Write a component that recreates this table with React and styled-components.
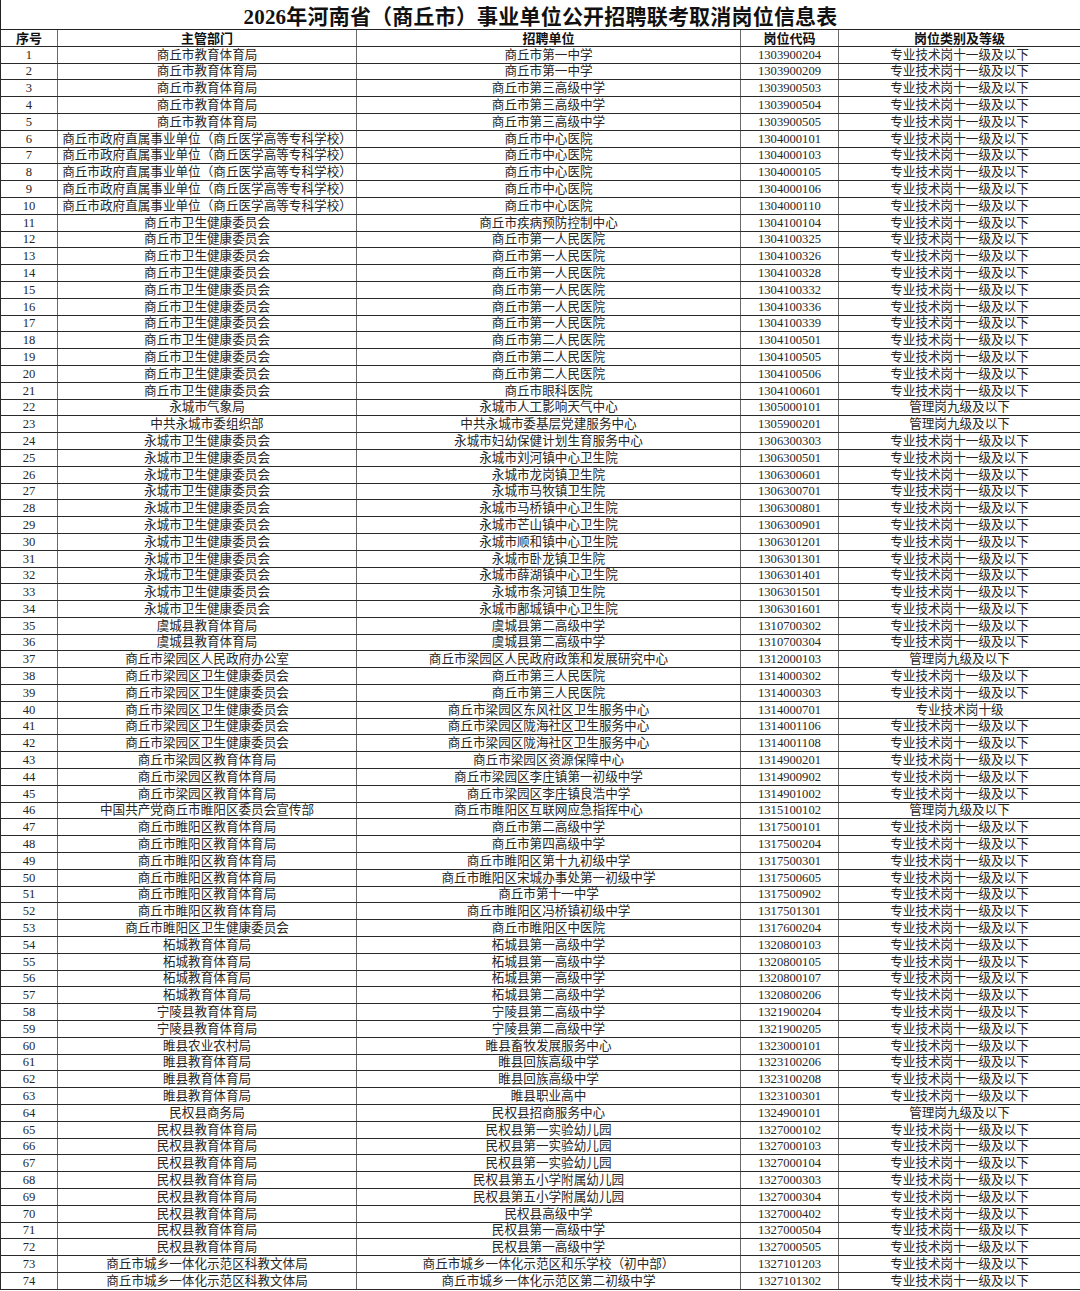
import React from "react";
import styled, { createGlobalStyle } from "styled-components";

const GlobalStyle = createGlobalStyle`
  html, body {
    margin: 0;
    padding: 0;
    background: #ffffff;
  }
  body {
    font-family: "Liberation Serif", "Noto Sans CJK SC", serif;
    color: #1c1c1c;
  }
`;

const COLS = "57px 299px 384px 98px 242px";
const ROW_H = "16.8px";

const Sheet = styled.div`
  width: 1080px;
  display: flex;
  flex-direction: column;
  background: #fff;
`;

const Title = styled.div`
  height: 30px;
  box-sizing: border-box;
  border-left: 1px solid #222;
  border-bottom: 1px solid #222;
  display: flex;
  align-items: center;
  justify-content: center;
  font-family: "Liberation Serif", "Noto Sans CJK SC", serif;
  font-weight: 700;
  font-size: 21px;
  color: #111;
  letter-spacing: 0.2px;
  padding-top: 1px;
`;

const Row = styled.div`
  display: grid;
  grid-template-columns: ${COLS};
  height: ${ROW_H};
  box-sizing: border-box;
  border-bottom: 1px solid #2a2a2a;
  border-left: 1px solid #2a2a2a;
`;

const Cell = styled.div`
  box-sizing: border-box;
  border-right: 1px solid ${(p) => (p.$last ? "#2a2a2a" : "#6a6a6a")};
  display: flex;
  align-items: flex-end;
  justify-content: center;
  white-space: nowrap;
  overflow: hidden;
  font-size: ${(p) => (p.$head ? "13px" : "12.6px")};
  font-weight: ${(p) => (p.$head ? 700 : 400)};
  line-height: 15px;
  padding-top: 1px;
  color: ${(p) => (p.$head ? "#111" : "#262626")};
`;

const T = "专业技术岗十一级及以下";
const M = "管理岗九级及以下";

const rows = [
  ["商丘市教育体育局", "商丘市第一中学", "1303900204", T],
  ["商丘市教育体育局", "商丘市第一中学", "1303900209", T],
  ["商丘市教育体育局", "商丘市第三高级中学", "1303900503", T],
  ["商丘市教育体育局", "商丘市第三高级中学", "1303900504", T],
  ["商丘市教育体育局", "商丘市第三高级中学", "1303900505", T],
  ["商丘市政府直属事业单位（商丘医学高等专科学校）", "商丘市中心医院", "1304000101", T],
  ["商丘市政府直属事业单位（商丘医学高等专科学校）", "商丘市中心医院", "1304000103", T],
  ["商丘市政府直属事业单位（商丘医学高等专科学校）", "商丘市中心医院", "1304000105", T],
  ["商丘市政府直属事业单位（商丘医学高等专科学校）", "商丘市中心医院", "1304000106", T],
  ["商丘市政府直属事业单位（商丘医学高等专科学校）", "商丘市中心医院", "1304000110", T],
  ["商丘市卫生健康委员会", "商丘市疾病预防控制中心", "1304100104", T],
  ["商丘市卫生健康委员会", "商丘市第一人民医院", "1304100325", T],
  ["商丘市卫生健康委员会", "商丘市第一人民医院", "1304100326", T],
  ["商丘市卫生健康委员会", "商丘市第一人民医院", "1304100328", T],
  ["商丘市卫生健康委员会", "商丘市第一人民医院", "1304100332", T],
  ["商丘市卫生健康委员会", "商丘市第一人民医院", "1304100336", T],
  ["商丘市卫生健康委员会", "商丘市第一人民医院", "1304100339", T],
  ["商丘市卫生健康委员会", "商丘市第二人民医院", "1304100501", T],
  ["商丘市卫生健康委员会", "商丘市第二人民医院", "1304100505", T],
  ["商丘市卫生健康委员会", "商丘市第二人民医院", "1304100506", T],
  ["商丘市卫生健康委员会", "商丘市眼科医院", "1304100601", T],
  ["永城市气象局", "永城市人工影响天气中心", "1305000101", M],
  ["中共永城市委组织部", "中共永城市委基层党建服务中心", "1305900201", M],
  ["永城市卫生健康委员会", "永城市妇幼保健计划生育服务中心", "1306300303", T],
  ["永城市卫生健康委员会", "永城市刘河镇中心卫生院", "1306300501", T],
  ["永城市卫生健康委员会", "永城市龙岗镇卫生院", "1306300601", T],
  ["永城市卫生健康委员会", "永城市马牧镇卫生院", "1306300701", T],
  ["永城市卫生健康委员会", "永城市马桥镇中心卫生院", "1306300801", T],
  ["永城市卫生健康委员会", "永城市芒山镇中心卫生院", "1306300901", T],
  ["永城市卫生健康委员会", "永城市顺和镇中心卫生院", "1306301201", T],
  ["永城市卫生健康委员会", "永城市卧龙镇卫生院", "1306301301", T],
  ["永城市卫生健康委员会", "永城市薛湖镇中心卫生院", "1306301401", T],
  ["永城市卫生健康委员会", "永城市条河镇卫生院", "1306301501", T],
  ["永城市卫生健康委员会", "永城市鄌城镇中心卫生院", "1306301601", T],
  ["虞城县教育体育局", "虞城县第二高级中学", "1310700302", T],
  ["虞城县教育体育局", "虞城县第二高级中学", "1310700304", T],
  ["商丘市梁园区人民政府办公室", "商丘市梁园区人民政府政策和发展研究中心", "1312000103", M],
  ["商丘市梁园区卫生健康委员会", "商丘市第三人民医院", "1314000302", T],
  ["商丘市梁园区卫生健康委员会", "商丘市第三人民医院", "1314000303", T],
  ["商丘市梁园区卫生健康委员会", "商丘市梁园区东风社区卫生服务中心", "1314000701", "专业技术岗十级"],
  ["商丘市梁园区卫生健康委员会", "商丘市梁园区陇海社区卫生服务中心", "1314001106", T],
  ["商丘市梁园区卫生健康委员会", "商丘市梁园区陇海社区卫生服务中心", "1314001108", T],
  ["商丘市梁园区教育体育局", "商丘市梁园区资源保障中心", "1314900201", T],
  ["商丘市梁园区教育体育局", "商丘市梁园区李庄镇第一初级中学", "1314900902", T],
  ["商丘市梁园区教育体育局", "商丘市梁园区李庄镇良浩中学", "1314901002", T],
  ["中国共产党商丘市睢阳区委员会宣传部", "商丘市睢阳区互联网应急指挥中心", "1315100102", M],
  ["商丘市睢阳区教育体育局", "商丘市第二高级中学", "1317500101", T],
  ["商丘市睢阳区教育体育局", "商丘市第四高级中学", "1317500204", T],
  ["商丘市睢阳区教育体育局", "商丘市睢阳区第十九初级中学", "1317500301", T],
  ["商丘市睢阳区教育体育局", "商丘市睢阳区宋城办事处第一初级中学", "1317500605", T],
  ["商丘市睢阳区教育体育局", "商丘市第十一中学", "1317500902", T],
  ["商丘市睢阳区教育体育局", "商丘市睢阳区冯桥镇初级中学", "1317501301", T],
  ["商丘市睢阳区卫生健康委员会", "商丘市睢阳区中医院", "1317600204", T],
  ["柘城教育体育局", "柘城县第一高级中学", "1320800103", T],
  ["柘城教育体育局", "柘城县第一高级中学", "1320800105", T],
  ["柘城教育体育局", "柘城县第一高级中学", "1320800107", T],
  ["柘城教育体育局", "柘城县第二高级中学", "1320800206", T],
  ["宁陵县教育体育局", "宁陵县第二高级中学", "1321900204", T],
  ["宁陵县教育体育局", "宁陵县第二高级中学", "1321900205", T],
  ["睢县农业农村局", "睢县畜牧发展服务中心", "1323000101", T],
  ["睢县教育体育局", "睢县回族高级中学", "1323100206", T],
  ["睢县教育体育局", "睢县回族高级中学", "1323100208", T],
  ["睢县教育体育局", "睢县职业高中", "1323100301", T],
  ["民权县商务局", "民权县招商服务中心", "1324900101", M],
  ["民权县教育体育局", "民权县第一实验幼儿园", "1327000102", T],
  ["民权县教育体育局", "民权县第一实验幼儿园", "1327000103", T],
  ["民权县教育体育局", "民权县第一实验幼儿园", "1327000104", T],
  ["民权县教育体育局", "民权县第五小学附属幼儿园", "1327000303", T],
  ["民权县教育体育局", "民权县第五小学附属幼儿园", "1327000304", T],
  ["民权县教育体育局", "民权县高级中学", "1327000402", T],
  ["民权县教育体育局", "民权县第一高级中学", "1327000504", T],
  ["民权县教育体育局", "民权县第一高级中学", "1327000505", T],
  ["商丘市城乡一体化示范区科教文体局", "商丘市城乡一体化示范区和乐学校（初中部）", "1327101203", T],
  ["商丘市城乡一体化示范区科教文体局", "商丘市城乡一体化示范区第二初级中学", "1327101302", T],
];

const heads = ["序号", "主管部门", "招聘单位", "岗位代码", "岗位类别及等级"];

export default function App() {
  return (
    <>
      <GlobalStyle />
      <Sheet>
        <Title>2026年河南省（商丘市）事业单位公开招聘联考取消岗位信息表</Title>
        <Row>
          {heads.map((h, i) => (
            <Cell key={h} $head $last={i === heads.length - 1}>
              {h}
            </Cell>
          ))}
        </Row>
        {rows.map((r, idx) => (
          <Row key={idx}>
            <Cell>{idx + 1}</Cell>
            <Cell>{r[0]}</Cell>
            <Cell>{r[1]}</Cell>
            <Cell>{r[2]}</Cell>
            <Cell $last>{r[3]}</Cell>
          </Row>
        ))}
      </Sheet>
    </>
  );
}
